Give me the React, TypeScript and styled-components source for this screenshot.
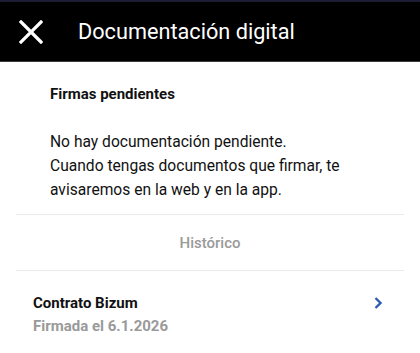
import React from "react";
import styled, { createGlobalStyle } from "styled-components";

const Global = createGlobalStyle`
  html, body { margin: 0; padding: 0; background: #fff; }
  body { font-family: Roboto, "Noto Sans", Arial, sans-serif; -webkit-font-smoothing: antialiased; }
  * { box-sizing: border-box; }
`;

const Page = styled.div`
  width: 420px;
  height: 353px;
  overflow: hidden;
  background: #fff;
  display: flex;
  flex-direction: column;
`;

const Header = styled.header`
  height: 62px;
  background: #000;
  border-top: 2px solid #1c1d33;
  border-bottom: 1px solid #3a3a3a;
  display: flex;
  align-items: center;
  padding-left: 18px;
  gap: 34px;
`;

const CloseButton = styled.button`
  width: 26px;
  height: 26px;
  padding: 0;
  border: 0;
  background: transparent;
  display: flex;
  align-items: center;
  justify-content: center;
`;

const Title = styled.h1`
  margin: 0;
  color: #fff;
  font-size: 21.7px;
  font-weight: 400;
`;

const PendingSection = styled.section`
  padding: 22px 50px 12px 50px;
`;

const SectionTitle = styled.h2`
  margin: 0;
  font-size: 15px;
  font-weight: 700;
  color: #111;
  line-height: 20px;
`;

const Body = styled.p`
  margin: 26px 0 0;
  font-size: 15.6px;
  line-height: 24px;
  color: #111;
`;

const Divider = styled.hr`
  margin: 0 16px;
  border: 0;
  border-top: 1px solid #ececec;
`;

const HistoryLabel = styled.div`
  height: 55px;
  display: flex;
  align-items: center;
  justify-content: center;
  font-size: 15px;
  font-weight: 500;
  color: #9a9a9a;
`;

const ItemRow = styled.div`
  display: flex;
  align-items: flex-start;
  justify-content: space-between;
  padding: 22px 37px 0 33px;
`;

const ItemText = styled.div`
  display: flex;
  flex-direction: column;
  gap: 3px;
`;

const ItemTitle = styled.div`
  font-size: 15px;
  font-weight: 700;
  color: #111;
  line-height: 20px;
`;

const ItemSub = styled.div`
  font-size: 15px;
  font-weight: 700;
  color: #9a9a9a;
  line-height: 20px;
`;

const Chevron = styled.svg`
  margin-top: 3px;
`;

export default function App() {
  return (
    <Page>
      <Global />
      <Header>
        <CloseButton aria-label="Cerrar">
          <svg width="24" height="24" viewBox="0 0 24 24">
            <path d="M2 2 L22 22 M22 2 L2 22" stroke="#fff" strokeWidth="3.2" strokeLinecap="square" />
          </svg>
        </CloseButton>
        <Title>Documentación digital</Title>
      </Header>
      <PendingSection>
        <SectionTitle>Firmas pendientes</SectionTitle>
        <Body>
          No hay documentación pendiente.
          <br />
          Cuando tengas documentos que firmar, te
          <br />
          avisaremos en la web y en la app.
        </Body>
      </PendingSection>
      <Divider />
      <HistoryLabel>Histórico</HistoryLabel>
      <Divider />
      <ItemRow>
        <ItemText>
          <ItemTitle>Contrato Bizum</ItemTitle>
          <ItemSub>Firmada el 6.1.2026</ItemSub>
        </ItemText>
        <Chevron width="10" height="14" viewBox="0 0 10 14">
          <path d="M2.5 2 L7.5 7 L2.5 12" fill="none" stroke="#2f5bb7" strokeWidth="2.4" />
        </Chevron>
      </ItemRow>
    </Page>
  );
}
